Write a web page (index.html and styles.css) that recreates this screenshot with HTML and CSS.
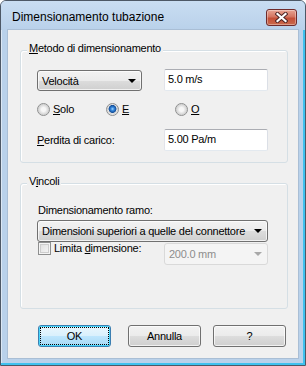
FILE: index.html
```html
<!DOCTYPE html>
<html>
<head lang="it">
    <meta charset="UTF-8">
    <title>Dimensionamento tubazione</title>
    <link rel="stylesheet" href="styles.css">
</head>
<body>
<div class="window">
    <div class="titlebar">
        <span class="title">Dimensionamento tubazione</span>
        <span class="close">
            <svg width="13" height="11" viewBox="0 0 13 11">
                <path d="M2.5 2 L10.5 9 M10.5 2 L2.5 9" stroke="#4a2222" stroke-width="4" stroke-linecap="square"/>
                <path d="M2.5 2 L10.5 9 M10.5 2 L2.5 9" stroke="#ffffff" stroke-width="2.2" stroke-linecap="square"/>
            </svg>
        </span>
    </div>
    <div class="client">
        <div class="group group-method">
            <span class="group-title"><u>M</u>etodo di dimensionamento</span>
            <div class="row row-top">
                <div class="combo combo-method"><span>Velocità</span><i class="arrow"></i></div>
                <div class="edit">5.0 m/s</div>
            </div>
            <div class="row radios">
                <span class="radio radio-solo"><i class="mark"></i><span><u>S</u>olo</span></span>
                <span class="radio radio-e"><i class="mark checked"></i><span><u>E</u></span></span>
                <span class="radio"><i class="mark"></i><span><u>O</u></span></span>
            </div>
            <div class="row row-loss">
                <span class="lbl"><u>P</u>erdita di carico:</span>
                <div class="edit">5.00 Pa/m</div>
            </div>
        </div>
        <div class="group group-limits">
            <span class="group-title">V<u>i</u>ncoli</span>
            <div class="lbl lbl-branch">Dimensionamento ramo:</div>
            <div class="combo combo-wide"><span>Dimensioni superiori a quelle del connettore</span><i class="arrow"></i></div>
            <div class="row row-limit">
                <span class="check"><i class="box"></i><span>Limita <u>d</u>imensione:</span></span>
                <div class="combo combo-off"><span>200.0 mm</span><i class="arrow"></i></div>
            </div>
        </div>
        <div class="buttons">
            <span class="btn btn-default"><span>OK</span></span>
            <span class="btn btn-cancel">Annulla</span>
            <span class="btn btn-help">?</span>
        </div>
    </div>
</div>
</body>
</html>
```

FILE: styles.css
```css
* {
    margin: 0;
    padding: 0;
    box-sizing: border-box;
}

body {
    background: #ffffff;
    font-family: "Liberation Sans", Arial, sans-serif;
    font-size: 11px;
    letter-spacing: -0.25px;
    color: #000000;
}

u {
    text-decoration: underline;
    text-underline-offset: 1px;
}

.window {
    width: 306px;
    height: 366px;
    background: #b9d1ea;
    border: 1px solid #4d5866;
    border-radius: 6px 6px 0 0;
    box-shadow: inset -2px -2px 0 #3ec1ef, inset 1px 1px 0 #dbe7f4;
}

.titlebar {
    height: 29px;
    display: flex;
    align-items: center;
    padding-left: 11px;
    padding-right: 8px;
    background: linear-gradient(#c9ddf2, #b9d1ea);
    border-radius: 5px 5px 0 0;
}

.title {
    flex: 1;
    font-size: 12px;
    letter-spacing: 0;
    padding-top: 3px;
}

.close {
    width: 31px;
    height: 17px;
    margin-top: 3px;
    display: flex;
    align-items: center;
    justify-content: center;
    border: 1px solid #6f2b2b;
    border-radius: 3px;
    background: linear-gradient(#e8a493, #d47561 45%, #c44f37 55%, #c96a4c);
    box-shadow: inset 0 0 0 1px rgba(255, 255, 255, .35);
}

.client {
    margin: 0 7px;
    height: 328px;
    background: #f0f0f0;
    padding: 20px 0 0 12px;
    box-shadow: 0 0 0 1px #a9bed5;
}

.group {
    position: relative;
    width: 268px;
    border: 1px solid #d5dfe5;
    border-radius: 3px;
    box-shadow: inset 1px 1px 0 #ffffff;
    padding-left: 16px;
}

.group-title {
    position: absolute;
    top: -9px;
    left: 6px;
    padding: 0 2px;
    line-height: 13px;
    background: #f0f0f0;
}

.group-method {
    height: 113px;
    padding-top: 18px;
}

.group-limits {
    margin-top: 20px;
    height: 126px;
    padding-top: 20px;
}

.row {
    display: flex;
    align-items: center;
}

.row-top {
    align-items: flex-start;
}

.combo {
    position: relative;
    height: 21px;
    display: flex;
    align-items: center;
    padding-left: 4px;
    border: 1px solid #707070;
    border-radius: 3px;
    background: linear-gradient(#f2f2f2, #ebebeb 50%, #dddddd 50%, #cfcfcf);
    box-shadow: inset 0 0 0 1px rgba(255, 255, 255, .7);
}

.arrow {
    position: absolute;
    right: 5px;
    top: 8px;
    border-left: 4px solid transparent;
    border-right: 4px solid transparent;
    border-top: 4px solid #000000;
}

.combo-method {
    width: 105px;
    margin-top: 1px;
    margin-right: 22px;
}

.edit {
    width: 104px;
    height: 22px;
    padding: 3px 0 0 3px;
    background: #ffffff;
    border: 1px solid;
    border-color: #abadb3 #dbdfe6 #e3e9ef #e2e3ea;
    border-radius: 2px;
}

.radios {
    margin-top: 12px;
    height: 13px;
}

.radio {
    display: flex;
    align-items: center;
    gap: 3px;
    line-height: 13px;
}

.radio-solo {
    width: 69px;
}

.radio-e {
    width: 69px;
}

.mark {
    width: 13px;
    height: 13px;
    border-radius: 50%;
    border: 1px solid #8e8f8f;
    background: radial-gradient(circle at 50% 50%, #f7f7f7 0, #f7f7f7 2px, #d4d4d4 5px, #ececec 6px);
}

.mark.checked {
    background: radial-gradient(circle at 50% 45%, #a8dbff 0, #3d8ee0 1.5px, #1c5fb0 3px, #174f96 3.6px, #e8e8e8 4.3px, #d4d4d4 5px, #ececec 6px);
}

.row-loss {
    margin-top: 13px;
    justify-content: space-between;
    padding-right: 19px;
}

.lbl {
    line-height: 13px;
}

.lbl-branch {
    margin-left: 1px;
}

.combo-wide {
    width: 231px;
    margin-top: 3px;
    height: 22px;
}

.row-limit {
    align-items: flex-start;
    justify-content: space-between;
    padding-right: 19px;
}

.check {
    display: flex;
    align-items: center;
    gap: 3px;
    line-height: 13px;
    padding-left: 1px;
}

.box {
    width: 13px;
    height: 13px;
    border: 1px solid #8e8f8f;
    background: linear-gradient(135deg, #dcdcdc, #f8f8f8);
    box-shadow: inset 0 0 0 1px #f4f4f4, inset 0 0 0 2px #cdcdcd;
}

.combo-off {
    width: 104px;
    height: 22px;
    margin-top: 1px;
    color: #8d8d8d;
    background: #f4f4f4;
    border-color: #d9d9d9;
    box-shadow: none;
}

.combo-off .arrow {
    border-top-color: #a8a8a8;
}

.buttons {
    display: flex;
    margin-top: 16px;
    padding-left: 18px;
}

.btn {
    width: 73px;
    height: 22px;
    display: flex;
    align-items: center;
    justify-content: center;
    border: 1px solid #707070;
    border-radius: 3px;
    background: linear-gradient(#f2f2f2, #ebebeb 50%, #dddddd 50%, #cfcfcf);
    box-shadow: inset 0 0 0 1px rgba(255, 255, 255, .7);
}

.btn-default {
    border-color: #3c7fb1;
    background: linear-gradient(#eaf6fd, #d9f0fc 50%, #bee6fd 50%, #a7d9f5);
    box-shadow: inset 0 0 0 1px #48d6fb;
    padding: 2px;
}

.btn-default span {
    flex: 1;
    height: 100%;
    display: flex;
    align-items: center;
    justify-content: center;
    outline: 1px dotted #000000;
}

.btn-cancel {
    margin-left: 17px;
}

.btn-help {
    margin-left: 12px;
}
```
